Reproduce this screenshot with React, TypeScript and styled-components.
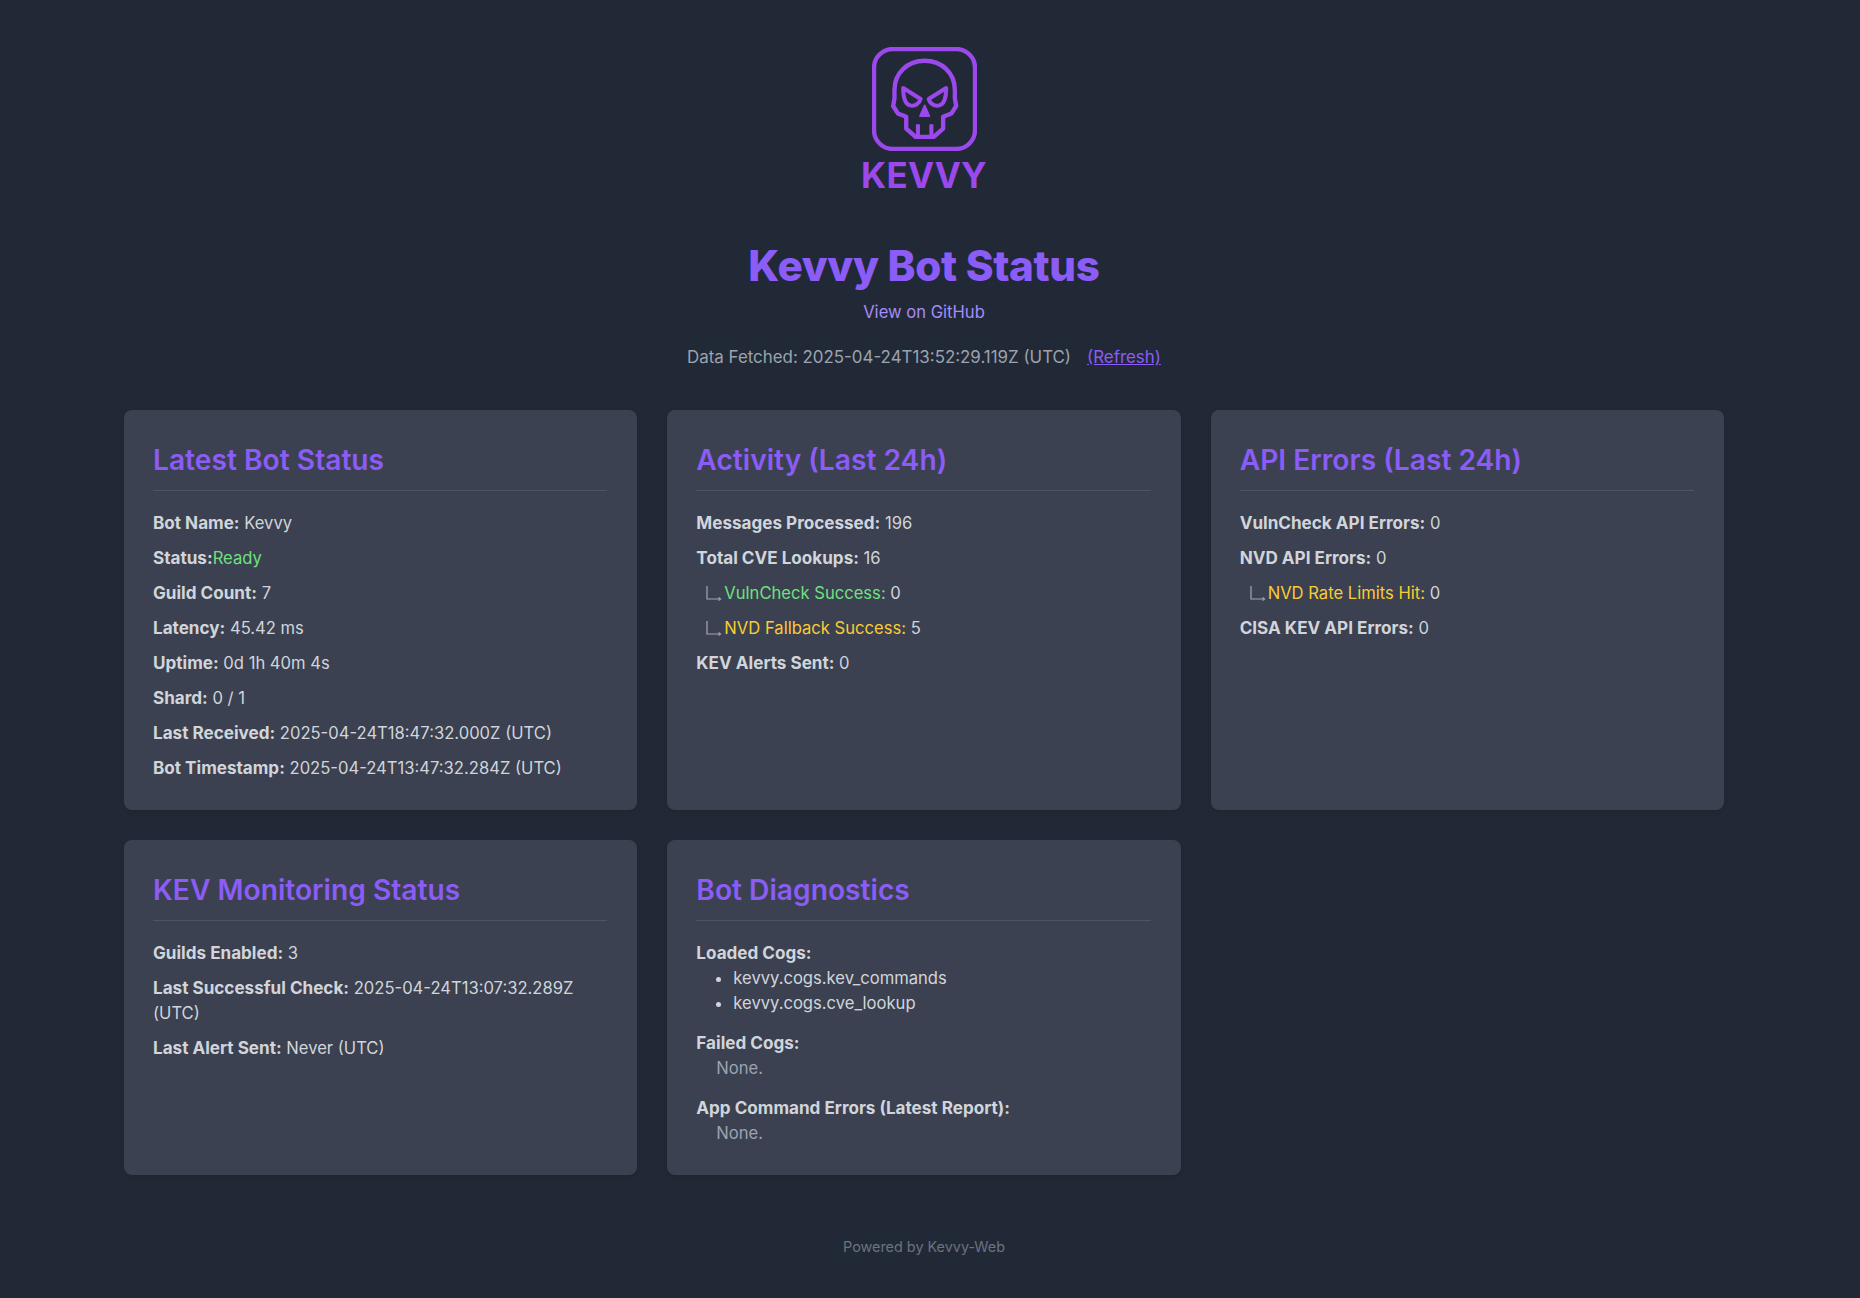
import React from "react";
import styled, { createGlobalStyle } from "styled-components";

const GlobalStyle = createGlobalStyle`
  html, body {
    margin: 0;
    padding: 0;
    background: #222936;
  }
  body {
    font-family: Inter, "Liberation Sans", sans-serif;
    font-size: 16.6px;
    line-height: 25px;
    color: #d1d5db;
  }
`;

const Logo = () => (
  <LogoSvg viewBox="95 52 313 310" fill="none" stroke="#9b48ec" strokeWidth="13" strokeLinejoin="round" strokeLinecap="round">
    <rect x="101" y="58" width="301" height="298" rx="56" />
    <path d="M252 93C200 93 162 130 162 180V205L158 228L172 250L197 260V295L225 320H279L307 295V260L332 250L346 228L342 205V180C342 130 304 93 252 93Z" />
    <path d="M188 174L240 207C236 222 222 230 208 226C194 222 188 200 188 174Z" strokeWidth="12" />
    <path d="M316 174L264 207C268 222 282 230 296 226C310 222 316 200 316 174Z" strokeWidth="12" />
    <path d="M252 226L266 258H238Z" fill="#9b48ec" strokeWidth="5" />
    <path d="M232 282V318M272 282V318" strokeWidth="12" strokeLinecap="butt" />
  </LogoSvg>
);

const Arrow = () => (
  <ArrowSvg viewBox="0 0 16 16" fill="none" stroke="#a4a8b4" strokeWidth="1.2">
    <path d="M1 1V14H14" />
    <path d="M12.5 12.5L14.5 14L12.5 15.5" />
  </ArrowSvg>
);

const Row = ({ label, value }: { label: string; value: string }) => (
  <Line>
    <b>{label}</b> {value}
  </Line>
);

const SubRow = ({ tone, label, value }: { tone: "green" | "yellow"; label: string; value: string }) => (
  <SubLine>
    <Arrow />
    <Tone $tone={tone}>{label}</Tone>&nbsp;{value}
  </SubLine>
);

export default function App() {
  return (
    <>
      <GlobalStyle />
      <Page>
        <Header>
          <LogoBlock>
            <Logo />
            <LogoWord>KEVVY</LogoWord>
          </LogoBlock>
          <Title>Kevvy Bot Status</Title>
          <GithubLink href="#">View on GitHub</GithubLink>
          <Fetched>
            Data Fetched: 2025-04-24T13:52:29.119Z (UTC)
            <RefreshLink href="#">(Refresh)</RefreshLink>
          </Fetched>
        </Header>
        <Grid>
          <Card>
            <CardTitle>Latest Bot Status</CardTitle>
            <Row label="Bot Name:" value="Kevvy" />
            <Line>
              <b>Status:</b>
              <Tone $tone="green">Ready</Tone>
            </Line>
            <Row label="Guild Count:" value="7" />
            <Row label="Latency:" value="45.42 ms" />
            <Row label="Uptime:" value="0d 1h 40m 4s" />
            <Row label="Shard:" value="0 / 1" />
            <Row label="Last Received:" value="2025-04-24T18:47:32.000Z (UTC)" />
            <Row label="Bot Timestamp:" value="2025-04-24T13:47:32.284Z (UTC)" />
          </Card>
          <Card>
            <CardTitle>Activity (Last 24h)</CardTitle>
            <Row label="Messages Processed:" value="196" />
            <Row label="Total CVE Lookups:" value="16" />
            <SubRow tone="green" label="VulnCheck Success:" value="0" />
            <SubRow tone="yellow" label="NVD Fallback Success:" value="5" />
            <Row label="KEV Alerts Sent:" value="0" />
          </Card>
          <Card>
            <CardTitle>API Errors (Last 24h)</CardTitle>
            <Row label="VulnCheck API Errors:" value="0" />
            <Row label="NVD API Errors:" value="0" />
            <SubRow tone="yellow" label="NVD Rate Limits Hit:" value="0" />
            <Row label="CISA KEV API Errors:" value="0" />
          </Card>
          <Card>
            <CardTitle>KEV Monitoring Status</CardTitle>
            <Row label="Guilds Enabled:" value="3" />
            <Row label="Last Successful Check:" value="2025-04-24T13:07:32.289Z (UTC)" />
            <Row label="Last Alert Sent:" value="Never (UTC)" />
          </Card>
          <Card>
            <CardTitle>Bot Diagnostics</CardTitle>
            <Section>
              <b>Loaded Cogs:</b>
              <CogList>
                <li>kevvy.cogs.kev_commands</li>
                <li>kevvy.cogs.cve_lookup</li>
              </CogList>
            </Section>
            <Section>
              <b>Failed Cogs:</b>
              <Empty>None.</Empty>
            </Section>
            <Section>
              <b>App Command Errors (Latest Report):</b>
              <Empty>None.</Empty>
            </Section>
          </Card>
        </Grid>
        <Footer>Powered by Kevvy-Web</Footer>
      </Page>
    </>
  );
}

const Page = styled.div`
  width: 1600px;
  margin-left: 124px;
  padding: 47px 0 30px;
  font-weight: 400;

  b {
    font-size: 17.1px;
    line-height: 1;
    font-weight: 700;
  }
`;

const Header = styled.header`
  display: flex;
  flex-direction: column;
  align-items: center;
  margin-bottom: 40px;
`;

const LogoBlock = styled.div`
  display: flex;
  flex-direction: column;
  align-items: center;
  width: 130px;
`;

const LogoSvg = styled.svg`
  width: 105px;
  height: 104px;
  display: block;
`;

const LogoWord = styled.div`
  font-size: 35px;
  line-height: 36px;
  font-weight: 700;
  letter-spacing: 0.2px;
  color: #9b48ec;
  margin-top: 6px;
`;

const Title = styled.h1`
  margin: 48px 0 0;
  font-size: 42.2px;
  line-height: 50px;
  font-weight: 800;
  letter-spacing: -0.35px;
  color: #8b5cf6;
`;

const GithubLink = styled.a`
  margin-top: 9px;
  color: #a78bfa;
  text-decoration: none;
`;

const Fetched = styled.div`
  margin-top: 20px;
  font-size: 16.9px;
  color: #9ca3af;
`;

const RefreshLink = styled.a`
  margin-left: 16px;
  color: #8b5cf6;
  text-decoration: underline;
`;

const Grid = styled.main`
  display: grid;
  grid-template-columns: repeat(3, 1fr);
  gap: 30px;
`;

const Card = styled.section`
  background: #3b4150;
  border-radius: 8px;
  padding: 30px 30px 29px 29px;
  box-shadow: 0 2px 4px rgba(0, 0, 0, 0.1);

  > :last-child {
    margin-bottom: 0;
  }
`;

const CardTitle = styled.h2`
  margin: 0 0 20px;
  padding-bottom: 10px;
  border-bottom: 1px solid #4b5563;
  font-size: 28.2px;
  line-height: 40px;
  font-weight: 600;
  color: #8b5cf6;
`;

const Line = styled.p`
  margin: 0 0 10px;
`;

const SubLine = styled.p`
  margin: 0 0 10px;
  padding-left: 10px;
  display: flex;
  align-items: center;
`;

const ArrowSvg = styled.svg`
  width: 16px;
  height: 16px;
  margin: -2px 2px 0 0;
`;

const Tone = styled.span<{ $tone: "green" | "yellow" }>`
  color: ${(p) => (p.$tone === "green" ? "#6ee07f" : "#facc32")};
`;

const Section = styled.div`
  margin-bottom: 15px;
`;

const CogList = styled.ul`
  margin: 0;
  padding-left: 37px;
`;

const Empty = styled.div`
  padding-left: 20px;
  color: #9ca3af;
`;

const Footer = styled.footer`
  margin-top: 59px;
  text-align: center;
  font-size: 14.4px;
  color: #6b7280;
`;
